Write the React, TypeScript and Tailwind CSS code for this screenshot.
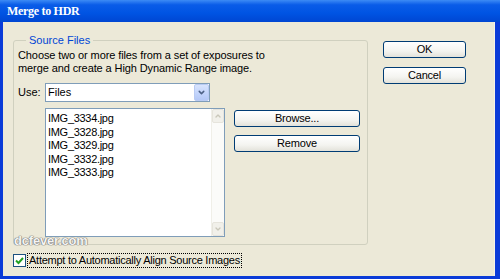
import { ChevronDown, ChevronUp } from 'lucide-react';

const files = ['IMG_3334.jpg', 'IMG_3328.jpg', 'IMG_3329.jpg', 'IMG_3332.jpg', 'IMG_3333.jpg'];

function XpButton({ label, className = '' }: { label: string; className?: string }) {
  return (
    <div
      className={`flex items-center justify-center h-[17px] rounded-[3px] border border-[#003c74] bg-[linear-gradient(to_bottom,#ffffff_0%,#f4f4f0_60%,#e3e2da_100%)] text-[11px] tracking-[-0.2px] text-black ${className}`}
    >
      {label}
    </div>
  );
}

export default function App() {
  return (
    <div className="w-[500px] h-[279px] flex flex-col bg-[#0a3bd8] font-['Liberation_Sans',Arial,sans-serif] overflow-hidden">
      {/* 标题栏 */}
      <div className="h-[22px] shrink-0 flex items-center pl-[7px] bg-[linear-gradient(to_bottom,#3d8bf5_0%,#0a5ce8_22%,#0054e3_60%,#0046d2_100%)]">
        <span className="text-white font-bold text-[12px] font-['Liberation_Serif',serif] tracking-[-0.3px]">
          Merge to HDR
        </span>
      </div>

      {/* 窗口主体 */}
      <div className="flex-1 ml-[3px] mr-[5px] mb-[3px] bg-[#ece9d8] border-r border-[#f4f2e8] flex relative">
        {/* 左列 */}
        <div className="flex flex-col pl-[10px]">
          <div className="relative mt-[18px] w-[355px] h-[205px] border border-[#d0d0bf] rounded-[3px] pt-[8px] pl-[4px]">
            <span className="absolute -top-[7px] left-[12px] px-[3px] bg-[#ece9d8] text-[11px] leading-[13px] text-[#0046d5]">
              Source Files
            </span>
            <div className="text-[11px] leading-[13px] tracking-[-0.1px] text-black">
              Choose two or more files from a set of exposures to
              <br />
              merge and create a High Dynamic Range image.
            </div>

            <div className="flex items-center mt-[8px] h-[19px]">
              <span className="w-[27px] text-[11px] text-black">Use:</span>
              <div className="w-[165px] h-[19px] flex items-center border border-[#7f9db9] bg-white">
                <span className="flex-1 pl-[2px] text-[11px] text-black">Files</span>
                <div className="w-[15px] h-[17px] rounded-[2px] bg-[linear-gradient(to_bottom,#d8e4fd_0%,#c1d3fb_60%,#b4c8f6_100%)] border border-[#b9cbf3] flex items-center justify-center">
                  <ChevronDown className="w-[9px] h-[9px] text-[#4d6185]" strokeWidth={4} />
                </div>
              </div>
            </div>

            <div className="flex mt-[6px]">
              <div className="ml-[27px] w-[180px] h-[129px] border border-[#7f9db9] bg-white flex">
                <div className="flex-1 pt-[3px] pl-[2px] text-[11px] leading-[13.5px] tracking-[-0.3px] text-black">
                  {files.map((f) => (
                    <div key={f}>{f}</div>
                  ))}
                </div>
                <div className="w-[13px] flex flex-col justify-between bg-[#fbfbf9] border-l border-[#f0efe8]">
                  <div className="h-[14px] flex items-center justify-center bg-[#f1f0ea] border border-[#e6e4dc] rounded-[2px]">
                    <ChevronUp className="w-[8px] h-[8px] text-[#c9c7ba]" strokeWidth={4} />
                  </div>
                  <div className="h-[14px] flex items-center justify-center bg-[#f1f0ea] border border-[#e6e4dc] rounded-[2px]">
                    <ChevronDown className="w-[8px] h-[8px] text-[#c9c7ba]" strokeWidth={4} />
                  </div>
                </div>
              </div>
              <div className="ml-[9px] mt-[2px] flex flex-col gap-[8px]">
                <XpButton label="Browse..." className="w-[126px]" />
                <XpButton label="Remove" className="w-[126px]" />
              </div>
            </div>
          </div>

          {/* 自动对齐选项 */}
          <div className="flex items-center mt-[8px]">
            <div className="w-[13px] h-[13px] border border-[#1c5180] bg-white flex items-center justify-center">
              <svg width="9" height="9" viewBox="0 0 9 9">
                <path d="M1 4.5 L3.5 7 L8 2" fill="none" stroke="#21a121" strokeWidth="2" />
              </svg>
            </div>
            <span className="ml-[1px] px-[1px] border border-dotted border-black text-[11px] leading-[13px] tracking-[-0.25px] text-black">
              Attempt to Automatically Align Source Images
            </span>
          </div>
        </div>

        {/* 右列按钮 */}
        <div className="ml-[15px] mt-[19px] flex flex-col gap-[9px]">
          <XpButton label="OK" className="w-[83px]" />
          <XpButton label="Cancel" className="w-[83px]" />
        </div>

        {/* 水印 */}
        <span className="absolute left-[11px] top-[211px] text-[13px] leading-[15px] font-black tracking-[-0.2px] text-[#f4f4f4] [text-shadow:0_0_1px_#6e6e6e,0_0_1px_#6e6e6e,0_0_1px_#6e6e6e]">
          dcfever.com
        </span>
      </div>
    </div>
  );
}
